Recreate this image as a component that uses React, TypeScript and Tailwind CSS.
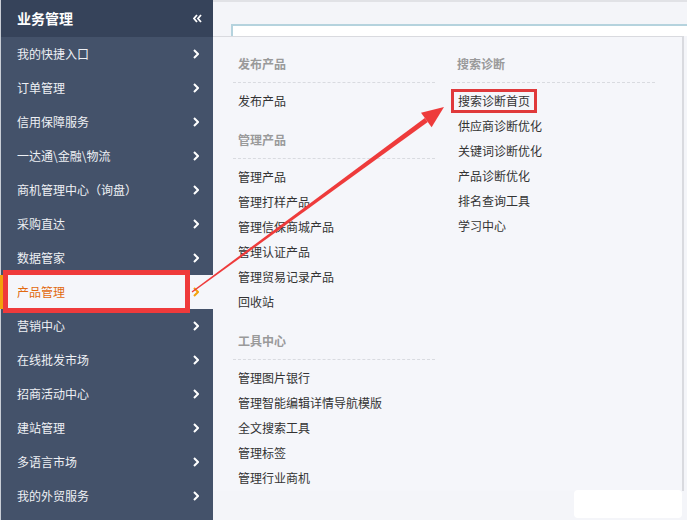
const menu = [
  '我的快捷入口',
  '订单管理',
  '信用保障服务',
  '一达通\\金融\\物流',
  '商机管理中心（询盘）',
  '采购直达',
  '数据管家',
  '产品管理',
  '营销中心',
  '在线批发市场',
  '招商活动中心',
  '建站管理',
  '多语言市场',
  '我的外贸服务',
];

const leftGroups = [
  { title: '发布产品', items: ['发布产品'] },
  {
    title: '管理产品',
    items: ['管理产品', '管理打样产品', '管理信保商城产品', '管理认证产品', '管理贸易记录产品', '回收站'],
  },
  {
    title: '工具中心',
    items: ['管理图片银行', '管理智能编辑详情导航模版', '全文搜索工具', '管理标签', '管理行业商机'],
  },
];

const rightItems = ['搜索诊断首页', '供应商诊断优化', '关键词诊断优化', '产品诊断优化', '排名查询工具', '学习中心'];

function Chevron({ color = '#ffffff' }: { color?: string }) {
  return (
    <svg width="6" height="10" viewBox="0 0 6 10">
      <polyline points="1,1 5,5 1,9" fill="none" stroke={color} strokeWidth="2" />
    </svg>
  );
}

function Group({ title, children }: { title: string; children: React.ReactNode }) {
  return (
    <div className="pt-[18px]">
      <div className="ml-[5px] text-[12px] leading-[18px] font-bold text-[#9a9a9a]">{title}</div>
      <div className="mt-[9px] mb-[5px] border-t border-dashed border-[#d9dbe0]" />
      {children}
    </div>
  );
}

export default function App() {
  return (
    <div
      className="relative flex w-[687px] h-[520px] overflow-hidden bg-[#f4f5f9]"
      style={{ fontFamily: '"Noto Sans CJK SC", "Noto Sans", sans-serif' }}
    >
      {/* sidebar */}
      <div className="w-[213px] shrink-0 bg-[#44526a] border-l border-[#c9ced6]">
        <div className="h-[37px] bg-[#36435a] flex items-center justify-between pl-[16px] pr-[11px]">
          <span className="text-[14px] font-bold text-white">业务管理</span>
          <svg width="9" height="9" viewBox="0 0 9 9">
            <polyline points="4,1 1,4.5 4,8" fill="none" stroke="#fff" strokeWidth="1.8" />
            <polyline points="8,1 5,4.5 8,8" fill="none" stroke="#fff" strokeWidth="1.8" />
          </svg>
        </div>
        {menu.map((m) =>
          m === '产品管理' ? (
            <div key={m} className="relative h-[34px] flex items-center justify-between bg-[#f5f6fa] pl-[16px] pr-[14px]">
              <div className="absolute left-[-1px] top-0 bottom-0 w-[4px] bg-[#f2a10c]" />
              <span className="text-[12px] text-[#e26a10]">{m}</span>
              <Chevron color="#f2a10c" />
              <div className="absolute left-[2px] top-[-5px] w-[187px] h-[43px] border-[5px] border-[#ef3a3b]" />
            </div>
          ) : (
            <div key={m} className="h-[34px] flex items-center justify-between pl-[16px] pr-[14px]">
              <span className="text-[12px] text-[#eef0f4]">{m}</span>
              <Chevron />
            </div>
          )
        )}
      </div>

      {/* main */}
      <div className="flex-1 flex flex-col border-t-2 border-[#e1e2e6]">
        <div className="h-[22px]" />
        <div className="ml-[18px] h-[12px] bg-white border-t-2 border-l-2 border-[#b5d3de]" />
        <div className="mr-[3px] h-[455px] bg-[#f5f6fa] border-t border-r-2 border-[#d9dadf] flex pl-[20px]">
          <div className="w-[219px]">
            <div className="w-[202px]">
              {leftGroups.map((g) => (
                <Group key={g.title} title={g.title}>
                  {g.items.map((it) => (
                    <div key={it} className="pl-[5px] text-[12px] leading-[25px] text-[#333]">
                      {it}
                    </div>
                  ))}
                </Group>
              ))}
            </div>
          </div>
          <div className="w-[203px]">
            <Group title="搜索诊断">
              {rightItems.map((it, i) =>
                i === 0 ? (
                  <div key={it} className="h-[25px] flex items-center">
                    <span className="-ml-[1px] px-[4px] text-[12px] leading-[18px] text-[#333] border-[3px] border-[#e0393b]">
                      {it}
                    </span>
                  </div>
                ) : (
                  <div key={it} className="pl-[6px] text-[12px] leading-[25px] text-[#333]">
                    {it}
                  </div>
                )
              )}
            </Group>
          </div>
        </div>
      </div>

      {/* watermark patch */}
      <div className="absolute left-[574px] top-[490px] w-[108px] h-[28px] bg-white rounded-[4px]" />

      {/* annotation arrow */}
      <svg className="absolute left-0 top-0 pointer-events-none" width="687" height="520" viewBox="0 0 687 520">
        <polygon
          points="191.6,291.4 192.4,292.6 427.8,122 424.8,118 "
          fill="#ee3b3b"
        />
        <polygon points="444,107 431.6,127.3 421,112.7" fill="#ee3b3b" />
      </svg>
    </div>
  );
}
